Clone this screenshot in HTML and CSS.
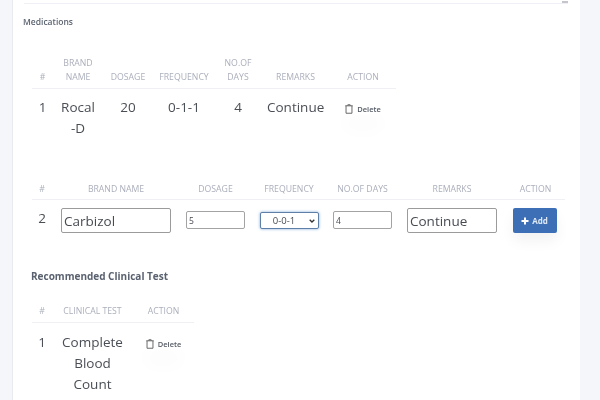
FILE: index.html
```html
<!DOCTYPE html>
<html>

<head>
    <link rel="stylesheet" href="styles.css">
</head>

<body>
    <main class="card">
        <div class="topline"><span class="topmark"></span></div>
        <h4 class="medtitle">Medications</h4>

        <table class="list medlist">
            <thead>
                <tr>
                    <th class="w-num">#</th>
                    <th class="w-brand">BRAND NAME</th>
                    <th class="w-dose">DOSAGE</th>
                    <th class="w-freq">FREQUENCY</th>
                    <th class="w-days">NO.OF DAYS</th>
                    <th class="w-rem">REMARKS</th>
                    <th class="w-act">ACTION</th>
                </tr>
            </thead>
            <tbody>
                <tr>
                    <td>1</td>
                    <td>Rocal -D</td>
                    <td>20</td>
                    <td>0-1-1</td>
                    <td>4</td>
                    <td>Continue</td>
                    <td class="actcell">
                        <button class="delete">
                            <svg viewBox="0 0 10 12" width="8" height="10"><path d="M3.5 1.8V.7h3v1.1M.4 2h9.200M1.300 2v9.300h7.400V2" fill="none" stroke="#555" stroke-width="1.100"/></svg>
                            Delete
                        </button>
                    </td>
                </tr>
            </tbody>
        </table>

        <table class="list addlist">
            <thead>
                <tr>
                    <th class="a-num">#</th>
                    <th class="a-brand">BRAND NAME</th>
                    <th class="a-dose">DOSAGE</th>
                    <th class="a-freq">FREQUENCY</th>
                    <th class="a-days">NO.OF DAYS</th>
                    <th class="a-rem">REMARKS</th>
                    <th class="a-act">ACTION</th>
                </tr>
            </thead>
            <tbody>
                <tr>
                    <td>2</td>
                    <td><input class="bigbox brandbox" type="text" value="Carbizol"></td>
                    <td><input class="smallbox" type="text" value="5"></td>
                    <td>
                        <select class="freqbox">
                            <option>0-0-1</option>
                        </select>
                    </td>
                    <td><input class="smallbox" type="text" value="4"></td>
                    <td><input class="bigbox rembox" type="text" value="Continue"></td>
                    <td>
                        <button class="add">
                            <svg viewBox="0 0 8 8" width="8" height="8"><path d="M4 .5v7M.5 4h7" stroke="#fff" stroke-width="2"/></svg>
                            Add
                        </button>
                    </td>
                </tr>
            </tbody>
        </table>

        <h4 class="testtitle">Recommended Clinical Test</h4>

        <table class="list testlist">
            <thead>
                <tr>
                    <th class="t-num">#</th>
                    <th class="t-name">CLINICAL TEST</th>
                    <th class="t-act">ACTION</th>
                </tr>
            </thead>
            <tbody>
                <tr>
                    <td>1</td>
                    <td>Complete Blood Count</td>
                    <td class="actcell">
                        <button class="delete">
                            <svg viewBox="0 0 10 12" width="8" height="10"><path d="M3.5 1.8V.7h3v1.1M.4 2h9.200M1.300 2v9.300h7.400V2" fill="none" stroke="#555" stroke-width="1.100"/></svg>
                            Delete
                        </button>
                    </td>
                </tr>
            </tbody>
        </table>
    </main>
</body>

</html>
```

FILE: styles.css
```css
* {
    margin: 0;
    padding: 0;
    box-sizing: border-box;
    font-family: "Open Sans", sans-serif;
}

html,
body {
    height: 400px;
    overflow: hidden;
}

body {
    background-color: #f5f6fa;
    padding-left: 12px;
}

/* the reference is a soft, upscaled capture */
.card {
    width: 568px;
    height: 400px;
    background-color: #fff;
    border-left: 1px solid #e9eaf0;
    padding: 3px 0 0 18px;
    overflow: hidden;
    filter: blur(.35px);
}

.topline {
    position: relative;
    width: 544px;
    margin-left: -7px;
    height: 1px;
    background-color: #eef0f6;
}

.topmark {
    position: absolute;
    right: 0;
    top: -2px;
    width: 6px;
    height: 2px;
    background-color: #c4c6cc;
}

.medtitle {
    margin-top: 12px;
    margin-left: -8px;
    font-size: 8.500px;
    line-height: 12px;
    font-weight: 600;
    color: #5c6470;
}

.testtitle {
    margin-top: 28px;
    font-size: 10px;
    line-height: 14px;
    font-weight: 700;
    color: #5a6270;
}

table {
    table-layout: fixed;
    border-collapse: collapse;
    margin-left: 1px;
}

.list th {
    font-size: 8.700px;
    line-height: 14px;
    font-weight: 400;
    color: #abafbb;
    text-align: center;
    vertical-align: bottom;
    padding: 0 6px 4px;
    border-bottom: 1px solid #eef0f4;
}

.list td {
    font-size: 13.500px;
    line-height: 21px;
    color: #4a4e55;
    text-align: center;
    vertical-align: top;
    padding: 8px 6px 0;
}

.medlist {
    width: 364px;
    margin-top: 28px;
}

.w-num { width: 21px; }
.w-brand { width: 50px; }
.w-dose { width: 50px; }
.w-freq { width: 62px; }
.w-days { width: 46px; }
.w-rem { width: 69px; }
.w-act { width: 66px; }

.w-rem,
.w-act,
.w-dose,
.w-freq {
    white-space: nowrap;
}

.list .w-rem,
.list .w-act,
.list .w-dose,
.list .w-freq {
    padding-left: 0;
    padding-right: 0;
}

.delete {
    display: inline-flex;
    align-items: center;
    gap: 4px;
    border: none;
    background: none;
    font-size: 7.500px;
    font-weight: 600;
    line-height: 10px;
    color: #555b64;
    margin-top: 7px;
    box-shadow: 0 14px 18px 2px #00000005;
    border-radius: 20px;
}

.addlist {
    width: 533px;
    margin-top: 43px;
}

.list.addlist th {
    padding: 0 0 3px;
    white-space: nowrap;
}

.list.addlist td {
    padding: 8px 0 0;
    height: 41px;
}

.a-num { width: 20px; }
.a-brand { width: 128px; }
.a-dose { width: 71px; }
.a-freq { width: 76px; }
.a-days { width: 71px; }
.a-rem { width: 108px; }
.a-act { width: 59px; }

input,
select {
    color: #474b52;
    background-color: #fff;
    vertical-align: top;
}

.bigbox {
    height: 25px;
    border: 1px solid #9b9b9b;
    border-radius: 2px;
    font-size: 13.500px;
    padding: 0 2px;
}

.brandbox { width: 110px; }
.rembox { width: 90px; }

.smallbox {
    width: 59px;
    height: 18px;
    margin-top: 3px;
    border: 1px solid #a3a3a3;
    border-radius: 2px;
    font-size: 8.500px;
    padding: 0 2px;
}

.freqbox {
    appearance: none;
    width: 59px;
    height: 17px;
    margin-top: 4px;
    padding-right: 10px;
    border: 1px solid #5e7fa8;
    border-radius: 2px;
    box-shadow: 0 0 3px #7fa6d8;
    font-size: 9.500px;
    text-align: center;
    outline: none;
    background-image: url("data:image/svg+xml,%3Csvg xmlns='http://www.w3.org/2000/svg' viewBox='0 0 6 4'%3E%3Cpath d='M.7.7 3 3l2.300-2.300' fill='none' stroke='%23333' stroke-width='1.300'/%3E%3C/svg%3E");
    background-repeat: no-repeat;
    background-size: 6px 4px;
    background-position: right 3px center;
}

.add {
    display: inline-flex;
    align-items: center;
    justify-content: center;
    gap: 3px;
    width: 44px;
    height: 25px;
    margin-right: 2px;
    border: none;
    border-radius: 2px;
    background-color: #3d6fb6;
    color: #dfe8f5;
    font-size: 8px;
    font-weight: 700;
    box-shadow: 0 8px 14px #0000000d;
}

.testlist {
    width: 162px;
    margin-top: 21px;
}

.t-num { width: 20px; }
.t-name { width: 81px; }
.t-act { width: 61px; }

.list.testlist th {
    padding-left: 0;
    padding-right: 0;
    white-space: nowrap;
}

.list.testlist td {
    padding: 9px 0 0;
}

.testlist td:nth-child(2) {
    padding-left: 8px;
    padding-right: 8px;
}
```
